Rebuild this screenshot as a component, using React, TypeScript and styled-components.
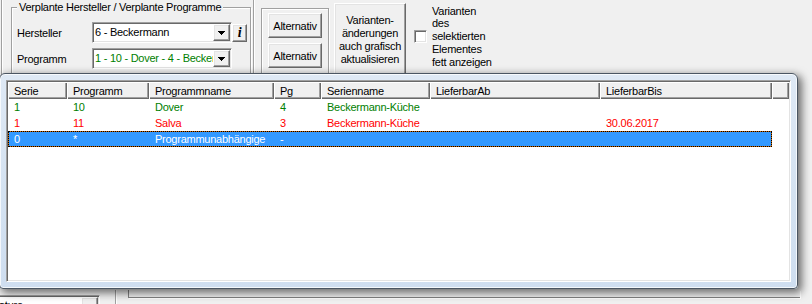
import React from "react";
import styled, { createGlobalStyle, css } from "styled-components";

const GlobalStyle = createGlobalStyle`
  html, body { margin: 0; padding: 0; background: #f0f0f0; }
  body {
    font-family: "Liberation Sans", Arial, sans-serif;
    font-size: 11px;
    letter-spacing: -0.25px;
    color: #000;
  }
  *, *::before, *::after { box-sizing: border-box; }
`;

const Page = styled.div`
  position: relative;
  width: 812px;
  height: 304px;
  overflow: hidden;
  background: #f0f0f0;
  display: flex;
  flex-direction: column;
`;

const TopBar = styled.div`
  flex: none;
  display: flex;
  align-items: flex-start;
  height: 84px;
  margin-left: 1px;
  border-left: 1px solid #a0a0a0;
  box-shadow: inset 1px 0 0 #fff;
`;

const GroupBox = styled.div<{ $width: number; $top: number; $gap: number }>`
  flex: none;
  width: ${(p) => p.$width}px;
  height: 80px;
  margin: ${(p) => p.$top}px 0 0 ${(p) => p.$gap}px;
  border: 1px solid #a0a0a0;
  box-shadow: inset 1px 1px 0 #fff, 1px 1px 0 #fff;
  display: flex;
  flex-direction: column;
`;

const ButtonGroup = styled(GroupBox)`
  padding: 4px 0 0 6px;
  gap: 5px;
`;

const GroupTitle = styled.div`
  align-self: flex-start;
  margin: -7px 0 0 5px;
  padding: 0 2px;
  height: 13px;
  line-height: 13px;
  background: #f0f0f0;
  white-space: nowrap;
`;

const FieldRow = styled.div<{ $top: number }>`
  display: flex;
  align-items: center;
  height: 21px;
  margin-top: ${(p) => p.$top}px;
  padding-left: 5px;
`;

const FieldLabel = styled.span`
  flex: none;
  width: 75px;
  white-space: nowrap;
`;

const sunken = css`
  border: 1px solid;
  border-color: #a0a0a0 #fff #fff #a0a0a0;
  box-shadow: inset 1px 1px 0 #696969, inset -1px -1px 0 #e3e3e3;
`;

const raised = css`
  background: #f0f0f0;
  border: 1px solid;
  border-color: #fff #696969 #696969 #fff;
  box-shadow: inset -1px -1px 0 #a0a0a0, inset 1px 1px 0 #e3e3e3;
`;

const Combo = styled.div<{ $width: number }>`
  flex: none;
  display: flex;
  width: ${(p) => p.$width}px;
  height: 21px;
  padding: 1px;
  background: #fff;
  ${sunken}
`;

const BottomCombo = styled(Combo)`
  margin: 5px 0 0 -4px;
`;

const ComboText = styled.span<{ $color: string }>`
  flex: 1;
  min-width: 0;
  overflow: hidden;
  white-space: nowrap;
  line-height: 17px;
  padding-left: 1px;
  color: ${(p) => p.$color};
`;

const DropButton = styled.span`
  flex: none;
  width: 17px;
  display: flex;
  align-items: center;
  justify-content: center;
  padding-top: 1px;
  ${raised}
`;

const InfoButton = styled.span`
  flex: none;
  width: 15px;
  height: 18px;
  display: flex;
  align-items: center;
  justify-content: center;
  font-family: "Liberation Serif", "Times New Roman", serif;
  font-weight: bold;
  font-style: italic;
  font-size: 14px;
  ${raised}
`;

const VRule = styled.div<{ $height: number; $gap: number }>`
  flex: none;
  width: 2px;
  height: ${(p) => p.$height}px;
  margin-left: ${(p) => p.$gap}px;
  border-left: 1px solid #a0a0a0;
  border-right: 1px solid #fff;
`;

const PushButton = styled.button`
  flex: none;
  width: 54px;
  height: 25px;
  padding: 0;
  font: inherit;
  letter-spacing: inherit;
  color: #000;
  ${raised}
`;

const BigButton = styled(PushButton)`
  width: 72px;
  height: 74px;
  margin: 3px 0 0 5px;
  line-height: 13px;
  text-align: center;
`;

const CheckOption = styled.label`
  flex: none;
  display: flex;
  align-items: center;
  height: 65px;
  margin: 4px 0 0 8px;
`;

const CheckBox = styled.span`
  flex: none;
  width: 13px;
  height: 13px;
  background: #fff;
  ${sunken}
`;

const CheckText = styled.span`
  width: 68px;
  margin-left: 5px;
  line-height: 12.7px;
`;

const Spacer = styled.div`
  flex: 1;
`;

const BottomBar = styled.div`
  flex: none;
  display: flex;
  align-items: flex-start;
  height: 14px;
`;

const PanelCorner = styled.div`
  flex: 1;
  height: 8px;
  margin: 0 12px 0 11px;
  border-left: 1px solid #828282;
  border-bottom: 1px solid #828282;
  box-shadow: 1px 1px 0 #fff;
`;

const Window = styled.div`
  position: absolute;
  left: -1px;
  top: 73px;
  width: 799px;
  height: 216px;
  padding: 6px;
  display: flex;
  border: 1px solid #4b5663;
  border-radius: 6px 6px 4px 4px;
  background: linear-gradient(180deg, #dfe9f5 0%, #d4e2f1 55%, #cfdef0 100%);
  box-shadow: inset 0 0 0 1px rgba(255, 255, 255, 0.75),
    3px 3px 8px 1px rgba(0, 0, 0, 0.55);
`;

const ListView = styled.div`
  flex: 1;
  display: flex;
  flex-direction: column;
  padding: 1px;
  background: #fff;
  ${sunken}
`;

const HeaderRow = styled.div`
  flex: none;
  display: flex;
  height: 17px;
`;

const HeaderCell = styled.div<{ $w?: number }>`
  ${(p) => (p.$w ? `flex: none; width: ${p.$w}px;` : "flex: 1;")}
  padding: 1px 0 0 6px;
  line-height: 16px;
  background: #f0f0f0;
  white-space: nowrap;
  overflow: hidden;
  box-shadow: inset 1px 1px 0 #fff, inset -1px -1px 0 #696969,
    inset -2px -2px 0 #a0a0a0;
`;

type Tone = "green" | "red" | "selected";

const toneColor: Record<Tone, string> = {
  green: "#008000",
  red: "#ff0000",
  selected: "#ffffff",
};

const DataRow = styled.div<{ $tone: Tone }>`
  flex: none;
  display: flex;
  width: 764px;
  height: 16px;
  color: ${(p) => toneColor[p.$tone]};
  ${(p) =>
    p.$tone === "selected" &&
    css`
      background: #3399ff;
      box-shadow: inset 0 0 0 1px #cc6600;
      outline: 1px dotted #000;
      outline-offset: -1px;
    `}
`;

const DataCell = styled.div<{ $w: number }>`
  flex: none;
  width: ${(p) => p.$w}px;
  padding-left: 6px;
  line-height: 16px;
  white-space: nowrap;
  overflow: hidden;
`;

const Arrow = () => (
  <svg width="7" height="4" viewBox="0 0 7 4" shapeRendering="crispEdges">
    <path d="M0 0h7v1H0zM1 1h5v1H1zM2 2h3v1H2zM3 3h1v1H3z" fill="#000" />
  </svg>
);

const columns = [
  { title: "Serie", w: 59 },
  { title: "Programm", w: 82 },
  { title: "Programmname", w: 125 },
  { title: "Pg", w: 47 },
  { title: "Serienname", w: 109 },
  { title: "LieferbarAb", w: 170 },
  { title: "LieferbarBis", w: 172 },
];

const rows: { tone: Tone; cells: string[] }[] = [
  { tone: "green", cells: ["1", "10", "Dover", "4", "Beckermann-Küche", "", ""] },
  { tone: "red", cells: ["1", "11", "Salva", "3", "Beckermann-Küche", "", "30.06.2017"] },
  { tone: "selected", cells: ["0", "*", "Programmunabhängige", "-", "", "", ""] },
];

export default function App() {
  return (
    <>
      <GlobalStyle />
      <Page>
        <TopBar>
          <GroupBox $width={240} $top={7} $gap={9}>
            <GroupTitle>Verplante Hersteller / Verplante Programme</GroupTitle>
            <FieldRow $top={8}>
              <FieldLabel>Hersteller</FieldLabel>
              <Combo $width={140}>
                <ComboText $color="#000">6 - Beckermann</ComboText>
                <DropButton>
                  <Arrow />
                </DropButton>
              </Combo>
              <InfoButton>i</InfoButton>
            </FieldRow>
            <FieldRow $top={5}>
              <FieldLabel>Programm</FieldLabel>
              <Combo $width={140}>
                <ComboText $color="#008000">1 - 10 - Dover - 4 - Beckermann-Küche</ComboText>
                <DropButton>
                  <Arrow />
                </DropButton>
              </Combo>
            </FieldRow>
          </GroupBox>
          <VRule $height={84} $gap={2} />
          <ButtonGroup $width={68} $top={8} $gap={6}>
            <PushButton>Alternativ</PushButton>
            <PushButton>Alternativ</PushButton>
          </ButtonGroup>
          <BigButton>
            Varianten-
            <br />
            änderungen
            <br />
            auch grafisch
            <br />
            aktualisieren
          </BigButton>
          <CheckOption>
            <CheckBox />
            <CheckText>
              Varianten
              <br />
              des
              <br />
              selektierten
              <br />
              Elementes
              <br />
              fett anzeigen
            </CheckText>
          </CheckOption>
        </TopBar>
        <Spacer />
        <BottomBar>
          <BottomCombo $width={104}>
            <ComboText $color="#000">ature</ComboText>
            <DropButton>
              <Arrow />
            </DropButton>
          </BottomCombo>
          <VRule $height={14} $gap={15} />
          <PanelCorner />
        </BottomBar>

        <Window>
          <ListView>
            <HeaderRow>
              {columns.map((c) => (
                <HeaderCell key={c.title} $w={c.w}>
                  {c.title}
                </HeaderCell>
              ))}
              <HeaderCell />
            </HeaderRow>
            {rows.map((r, i) => (
              <DataRow key={i} $tone={r.tone}>
                {r.cells.map((t, j) => (
                  <DataCell key={j} $w={columns[j].w}>
                    {t}
                  </DataCell>
                ))}
              </DataRow>
            ))}
          </ListView>
        </Window>
      </Page>
    </>
  );
}
